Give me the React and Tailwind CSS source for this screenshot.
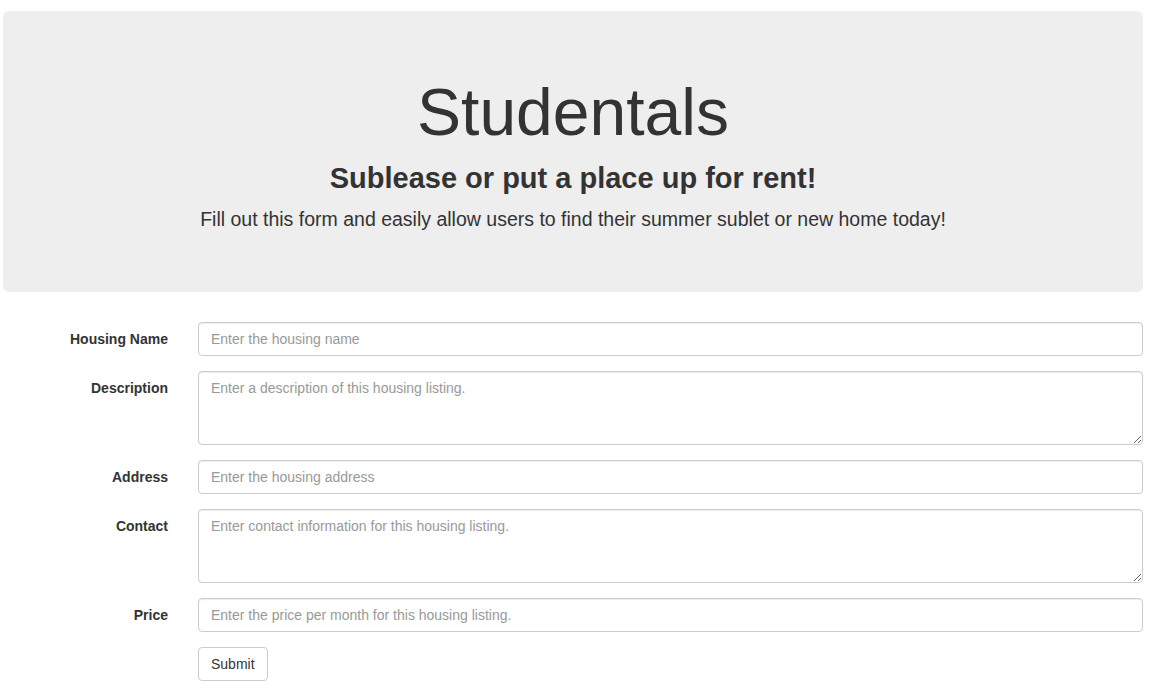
const fields = [
  { label: 'Housing Name', placeholder: 'Enter the housing name', multiline: false },
  { label: 'Description', placeholder: 'Enter a description of this housing listing.', multiline: true },
  { label: 'Address', placeholder: 'Enter the housing address', multiline: false },
  { label: 'Contact', placeholder: 'Enter contact information for this housing listing.', multiline: true },
  { label: 'Price', placeholder: 'Enter the price per month for this housing listing.', multiline: false },
];

const inputClass =
  'block w-full rounded-[4px] border border-[#ccc] bg-white px-3 py-[6px] text-[14px] leading-[20px] text-[#555] shadow-[inset_0_1px_1px_rgba(0,0,0,0.075)] outline-none placeholder:text-[#999]';

export default function App() {
  return (
    <div className="min-h-screen bg-white pl-[3px] pr-[20px] pt-[11px] text-[#333] [font-family:'Liberation_Sans',Arial,sans-serif]">
      <header className="rounded-[6px] bg-[#eee] pb-[59px] pt-[65px] text-center">
        <h1 className="text-[66px] leading-[72px] font-normal">Studentals</h1>
        <h2 className="mt-[14px] text-[29px] leading-[32px] font-bold">Sublease or put a place up for rent!</h2>
        <p className="mt-[11px] text-[19.5px] leading-[28px] font-light">
          Fill out this form and easily allow users to find their summer sublet or new home today!
        </p>
      </header>

      <form className="mt-[30px] flex flex-col gap-[15px]" onSubmit={(e) => e.preventDefault()}>
        {fields.map((f) => (
          <div key={f.label} className="flex items-start">
            <label className="w-[180px] shrink-0 pr-[15px] pt-[7px] text-right text-[14px] leading-[20px] font-bold">
              {f.label}
            </label>
            <div className="flex-1 pl-[15px]">
              {f.multiline ? (
                <textarea rows={3} placeholder={f.placeholder} className={`${inputClass} h-[74px]`} />
              ) : (
                <input type="text" placeholder={f.placeholder} className={`${inputClass} h-[34px]`} />
              )}
            </div>
          </div>
        ))}
        <div className="flex">
          <div className="w-[180px] shrink-0" />
          <div className="pl-[15px]">
            <button
              type="submit"
              className="h-[34px] rounded-[4px] border border-[#ccc] bg-white px-3 text-[14px] leading-[20px] text-[#333]"
            >
              Submit
            </button>
          </div>
        </div>
      </form>
    </div>
  );
}
